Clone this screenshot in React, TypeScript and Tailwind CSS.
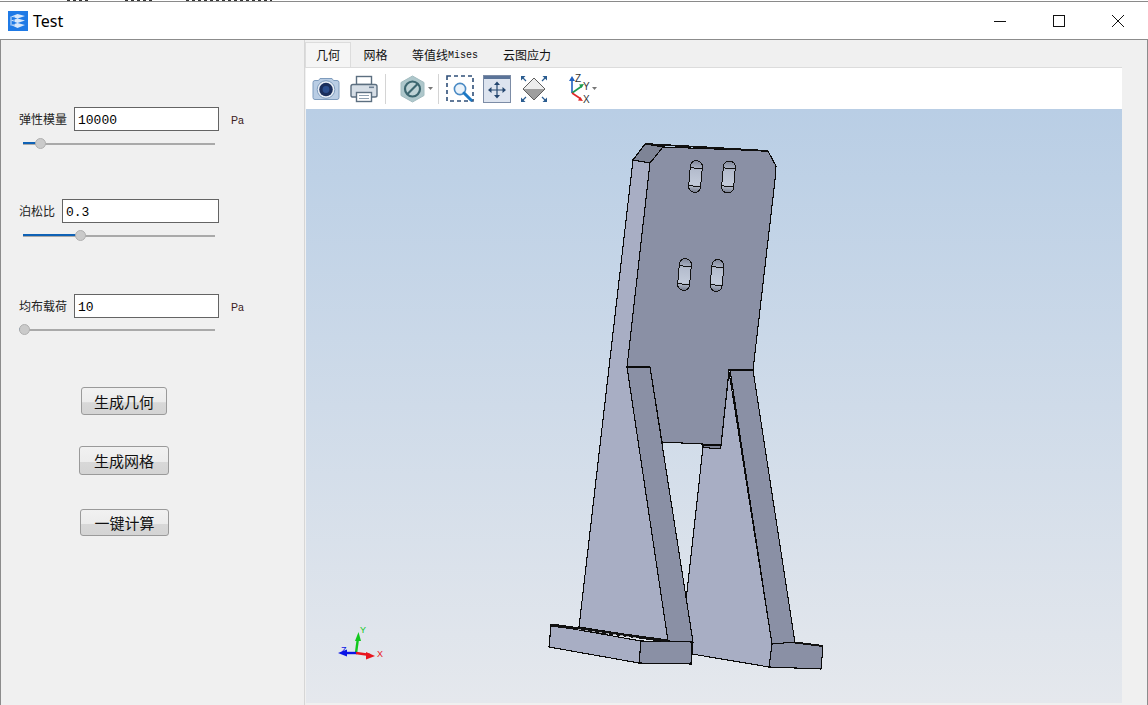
import React from "react";

const cjk = "font-['Noto_Sans_CJK_SC','Noto_Sans',sans-serif]";
const mono = "font-['Liberation_Mono','Noto_Sans_CJK_SC',monospace]";

function Slider({ pct, className }: { pct: number; className?: string }) {
  return (
    <div className={"relative h-[11px] w-[192px] flex items-center " + (className ?? "")}>
      <div className="h-[2px] w-full bg-[#a9a9a9]" />
      <div className="absolute left-0 top-[4px] h-[2px] bg-[#0f62b5]" style={{ width: `${pct}px` }} />
      <div
        className="absolute top-0 h-[11px] w-[11px] rounded-full bg-[#cacaca] border border-[#b0b0b0]"
        style={{ left: `${pct - 5}px` }}
      />
    </div>
  );
}

function Field({ label, value, unit, inputW }: { label: string; value: string; unit?: boolean; inputW: string }) {
  return (
    <div className="flex items-center h-[24px]">
      <span className={`${cjk} text-[12px] leading-none text-[#222] whitespace-nowrap`}>{label}</span>
      <div className={`${inputW} h-[24px] ml-[7px] bg-white border border-[#646464] flex items-center pl-[3px] pt-[3px] ${mono} text-[13px] text-black`}>
        {value}
      </div>
      {unit && <span className="ml-[12px] mt-[3px] font-['Liberation_Sans',sans-serif] text-[10.5px] text-[#3a2020]">Pa</span>}
    </div>
  );
}

function Btn({ children, w, h, className }: { children: React.ReactNode; w: string; h: string; className?: string }) {
  return (
    <div
      className={`${w} ${h} ${className ?? ""} flex items-center justify-center rounded-[3px] border border-[#9a9a9a] bg-[linear-gradient(#f1f1f1_0%,#ececec_55%,#d8d8d8_56%,#d4d4d4_100%)] ${cjk} text-[15px] leading-none text-[#111]`}
    >
      {children}
    </div>
  );
}

function Caret({ className }: { className?: string }) {
  return (
    <svg width="5" height="3" viewBox="0 0 5 3" className={className}>
      <path d="M0 0h5L2.5 3z" fill="#777" />
    </svg>
  );
}

function Camera() {
  return (
    <svg width="28" height="28" viewBox="0 0 28 28" className="ml-[6px] shrink-0">
      <path d="M1 7.5q0-2 2-2h3.5l1.5-2h12l1.5 2H25q2 0 2 2v15q0 2-2 2H3q-2 0-2-2z" fill="#b9cde4" stroke="#7f9cbd" strokeWidth="1" />
      <circle cx="14" cy="14.5" r="8.8" fill="#eaf0f7" stroke="#7f9cbd" />
      <circle cx="14" cy="14.5" r="6.8" fill="#1b2f5c" />
      <circle cx="14" cy="14.5" r="3.4" fill="#2c4f8e" />
    </svg>
  );
}

function Printer() {
  return (
    <svg width="28" height="28" viewBox="0 0 28 28" className="ml-[10px] shrink-0">
      <rect x="6.5" y="1.5" width="15" height="8" fill="#fff" stroke="#5c6f80" strokeWidth="1.4" />
      <path d="M3 9.5h22q2 0 2 2v9q0 1.5-2 1.5H3q-2 0-2-1.5v-9q0-2 2-2z" fill="#d6dee6" stroke="#5c6f80" strokeWidth="1.4" />
      <rect x="19" y="11.5" width="5" height="1.6" fill="#6f8296" />
      <rect x="6.5" y="17.5" width="15" height="9" fill="#fff" stroke="#5c6f80" strokeWidth="1.4" />
      <path d="M9 20.5h10M9 23.5h10" stroke="#8fa0b0" strokeWidth="1.2" />
    </svg>
  );
}

function Hex() {
  return (
    <svg width="25" height="28" viewBox="0 0 25 28" className="ml-[14px] shrink-0">
      <path d="M12.5 1L24 7.5v13L12.5 27 1 20.5v-13z" fill="#aec7cb" stroke="#a2bcc0" />
      <circle cx="12.5" cy="14" r="7.5" fill="#bfd3d6" stroke="#3d6770" strokeWidth="2.2" />
      <path d="M7.5 19L17.5 9" stroke="#3d6770" strokeWidth="2.2" />
    </svg>
  );
}

function ZoomBox() {
  return (
    <svg width="28" height="28" viewBox="0 0 28 28" className="ml-[7px] shrink-0">
      <rect x="1" y="1" width="26" height="25" fill="none" stroke="#2f4f78" strokeWidth="1.6" strokeDasharray="4 3" />
      <circle cx="14" cy="14" r="5.6" fill="#e9f2fa" stroke="#4a8ac4" strokeWidth="1.6" />
      <path d="M18 18l7 7" stroke="#1b78c4" strokeWidth="3" strokeLinecap="round" />
    </svg>
  );
}

function PanWin() {
  return (
    <svg width="28" height="28" viewBox="0 0 28 28" className="ml-[9px] shrink-0">
      <rect x="0.5" y="0.5" width="27" height="27" fill="#dde4ef" stroke="#7c8ca6" />
      <rect x="1" y="1" width="26" height="3" fill="#5a7398" />
      <path d="M14 9v12M8 15h12" stroke="#24466f" strokeWidth="1.2" />
      <path d="M14 6.5l-3 3.5h6zM14 23.5l-3-3.5h6zM5 15l3.5-3v6zM23 15l-3.5-3v6z" fill="#24466f" />
    </svg>
  );
}

function Diamond() {
  return (
    <svg width="28" height="28" viewBox="0 0 28 28" className="ml-[9px] shrink-0">
      <path d="M14 3L25 14H3z" fill="#ededed" />
      <path d="M3 14H25L14 25z" fill="#9e9e9e" />
      <path d="M14 3L25 14L14 25L3 14z" fill="none" stroke="#5e5e5e" strokeWidth="1" />
      <path d="M1 1h4.5L1 5.5zM27 1h-4.5L27 5.5zM1 27h4.5L1 22.5zM27 27h-4.5L27 22.5z" fill="#2a5c90" />
      <path d="M2 2l4 4M26 2l-4 4M2 26l4-4M26 26l-4-4" stroke="#2a5c90" strokeWidth="1.2" />
    </svg>
  );
}

function Axes() {
  return (
    <svg width="25" height="30" viewBox="0 0 25 30" className="ml-[18px] shrink-0">
      <path d="M6 19V5" stroke="#2060c0" strokeWidth="1.6" />
      <path d="M6 2l-3 5h6z" fill="#2060c0" />
      <path d="M6 19l10-7" stroke="#1c9a50" strokeWidth="1.6" />
      <path d="M18 10l-5 .5 2.5 3.5z" fill="#1c9a50" />
      <path d="M6 19l9 6" stroke="#e02828" strokeWidth="1.6" />
      <path d="M17 27l-5-.5 2.2-3.4z" fill="#e02828" />
      <text x="9" y="8" fontSize="10" fontFamily="Liberation Sans" fill="#333">Z</text>
      <text x="17" y="16" fontSize="10" fontFamily="Liberation Sans" fill="#333">Y</text>
      <text x="17" y="29" fontSize="10" fontFamily="Liberation Sans" fill="#333">X</text>
    </svg>
  );
}

function Slot({ cx, cy }: { cx: number; cy: number }) {
  return (
    <g transform={`rotate(5 ${cx} ${cy})`}>
      <rect x={cx - 6} y={cy - 16} width="12" height="32" rx="6" fill="url(#slot)" stroke="#111" strokeWidth="1" />
      <path d={`M${cx - 6} ${cy - 9}Q${cx} ${cy - 7.5} ${cx + 6} ${cy - 9}M${cx - 6} ${cy + 9}Q${cx} ${cy + 10.5} ${cx + 6} ${cy + 9}`} stroke="#111" strokeWidth="1" fill="none" />
    </g>
  );
}

function Model() {
  const light = "#a8aec4";
  const dark = "#8a90a5";
  const s = { stroke: "#0a0a0a", strokeWidth: 1.1, strokeLinejoin: "miter" as const };
  return (
    <svg className="absolute inset-0 w-full h-full" viewBox="306 109 816 594">
      <defs>
        <linearGradient id="slot" x1="0" y1="0" x2="0" y2="1">
          <stop offset="0" stopColor="#7f8598" />
          <stop offset="0.3" stopColor="#b4bccd" />
          <stop offset="0.75" stopColor="#c3cbda" />
          <stop offset="1" stopColor="#72788a" />
        </linearGradient>
      </defs>
      <g shapeRendering="crispEdges">
        {/* right leg */}
        <polygon points="729,372 772,644 769,667 692,654 693,642 685,610 703,447 721,446" fill={light} {...s} />
        <polygon points="730,370 753,370 795,643 772,644" fill={dark} {...s} />
        <polygon points="772,644 795,642 823,646 821,669 769,667" fill={dark} {...s} />
        <path d="M795 642.5L823 646" stroke="#111" strokeWidth="2" />
        {/* left leg */}
        <polygon points="633,160 650,163 627,367 668,641 579,627" fill={light} {...s} />
        <polygon points="627,367 650,367 693,642 668,641" fill={dark} {...s} />
        <polygon points="551,625 641,641 639,663 549,647" fill={light} {...s} />
        <polygon points="641,641 692,642 691,664 639,663" fill={dark} {...s} />
        <path d="M551 625L668 641" stroke="#111" strokeWidth="3" />
        <path d="M578 629L640 638" stroke="#cfd2da" strokeWidth="0.8" strokeDasharray="3 4" />
        {/* main plate */}
        <polygon
          points="663,147 768,151 776,166 775,180 753,370 729,370 721,445 662,442 650,367 627,367 650,163"
          fill={dark}
          {...s}
        />
        <polygon points="633,160 645,144 663,147 650,163" fill="#7e8496" {...s} />
        <path d="M645 144L664 145L700 147L768 151" stroke="#111" strokeWidth="1.8" fill="none" />
        <polygon points="703,445 721,445 720,449 709,448 703,447" fill="#7e8496" {...s} />
        <Slot cx={695.5} cy={176.5} />
        <Slot cx={728.5} cy={177} />
        <Slot cx={684.5} cy={274.5} />
        <Slot cx={717} cy={275.5} />
      </g>
      {/* triad */}
      <g>
        <path d="M356 653L358 638" stroke="#12c81e" strokeWidth="2.4" />
        <path d="M358.5 632l-3.5 9h6z" fill="#12c81e" />
        <path d="M357 653H346" stroke="#0a14e6" strokeWidth="2.4" />
        <path d="M338 653l9-3.5v7z" fill="#0a14e6" />
        <path d="M356 653L370 655" stroke="#e8141e" strokeWidth="2.4" />
        <path d="M375 656l-9-4v7.5z" fill="#e8141e" />
        <text x="360" y="633" fontSize="9" fontFamily="Liberation Sans" fill="#12c81e">Y</text>
        <text x="341" y="653" fontSize="9" fontFamily="Liberation Sans" fill="#0a14e6">Z</text>
        <text x="377" y="657" fontSize="9" fontFamily="Liberation Sans" fill="#e8141e">X</text>
      </g>
    </svg>
  );
}

const frags: [string, string][] = [
  ["ml-[67px]", "w-[24px]"],
  ["ml-[34px]", "w-[28px]"],
  ["ml-[33px]", "w-[86px]"],
];

export default function App() {
  return (
    <div className="w-[1148px] h-[705px] overflow-hidden flex flex-col bg-white">
      <div className="h-[2px] shrink-0 bg-white border-b border-[#8a8a8a] flex">
        {frags.map(([m, w], i) => (
          <div key={i} className={`${m} ${w} h-[1px] bg-[repeating-linear-gradient(90deg,#333_0_3px,transparent_3px_6px)]`} />
        ))}
      </div>
      <div className="h-[37px] shrink-0 flex items-center bg-white border-b border-[#8c8c8c] box-content">
        <svg width="20" height="20" viewBox="0 0 20 20" className="ml-[8px]">
          <rect width="20" height="20" fill="#1f7ae6" />
          <path d="M3 5.5L9.5 3 17 5 9.5 7.5zM3 9.5l6.5-2 7.5 2-7.5 2.5zM3 14l6.5-2 7.5 2-7.5 3z" fill="#d8e8fb" />
          <path d="M3 5.5v9" stroke="#d8e8fb" strokeWidth="1" />
          <path d="M6 5.5v9" stroke="#1f7ae6" strokeWidth="0.8" />
        </svg>
        <span className="ml-[5px] font-['Noto_Sans',sans-serif] text-[16px] leading-none text-black">Test</span>
        <div className="ml-auto flex items-center">
          <svg width="12" height="12" viewBox="0 0 12 12" className="mr-[47px]"><path d="M0 6.5h12" stroke="#111" /></svg>
          <svg width="12" height="12" viewBox="0 0 12 12" className="mr-[47px]"><rect x="0.5" y="0.5" width="11" height="11" fill="none" stroke="#111" /></svg>
          <svg width="12" height="12" viewBox="0 0 12 12" className="mr-[24px]"><path d="M0 0l12 12M12 0L0 12" stroke="#111" /></svg>
        </div>
      </div>
      <div className="flex-1 flex min-h-0 bg-[#f0f0f0] border-x border-[#8c8c8c]">
        <div className="w-[304px] shrink-0 border-r border-[#d6d6d6] flex flex-col pl-[18px]">
          <div className="mt-[67px]">
            <Field label="弹性模量" value="10000" unit inputW="w-[145px]" />
          </div>
          <Slider pct={17} className="mt-[7px] ml-[4px]" />
          <div className="mt-[50px]">
            <Field label="泊松比" value="0.3" inputW="w-[157px]" />
          </div>
          <Slider pct={57} className="mt-[7px] ml-[4px]" />
          <div className="mt-[53px]">
            <Field label="均布载荷" value="10" unit inputW="w-[145px]" />
          </div>
          <Slider pct={5} className="mt-[6px] !w-[196px]" />
          <Btn w="w-[86px]" h="h-[28px]" className="mt-[52px] ml-[62px]">生成几何</Btn>
          <Btn w="w-[90px]" h="h-[29px]" className="mt-[31px] ml-[60px]">生成网格</Btn>
          <Btn w="w-[89px]" h="h-[27px]" className="mt-[34px] ml-[61px]">一键计算</Btn>
        </div>
        <div className="flex-1 min-w-0 flex flex-col pr-[25px] pt-[3px] pb-[2px]">
          <div className={`h-[25px] shrink-0 flex items-end ${cjk} text-[12px] text-[#111] border-b border-[#dcdcdc]`}>
            <div className="w-[46px] h-[25px] flex items-center justify-center bg-[#f5f5f5] border border-[#dcdcdc] border-b-0">几何</div>
            <div className="w-[49px] h-[24px] flex items-center justify-center">网格</div>
            <div className="w-[90px] h-[24px] flex items-center justify-center whitespace-nowrap">
              等值线<span className={`${mono} text-[10px]`}>Mises</span>
            </div>
            <div className="w-[60px] ml-[7px] h-[24px] flex items-center justify-center whitespace-nowrap">云图应力</div>
          </div>
          <div className="flex-1 min-h-0 flex flex-col ml-[1px]">
            <div className="h-[41px] shrink-0 bg-white flex items-center">
              <Camera />
              <Printer />
              <div className="w-px h-[30px] bg-[#d4d4d4] ml-[7px]" />
              <Hex />
              <Caret className="ml-[3px]" />
              <div className="w-px h-[30px] bg-[#d4d4d4] ml-[5px]" />
              <ZoomBox />
              <PanWin />
              <Diamond />
              <Axes />
              <Caret className="ml-[1px]" />
            </div>
            <div className="relative flex-1 min-h-0 bg-[linear-gradient(#b9cee5,#e5e8ed)]">
              <Model />
            </div>
          </div>
        </div>
      </div>
    </div>
  );
}
